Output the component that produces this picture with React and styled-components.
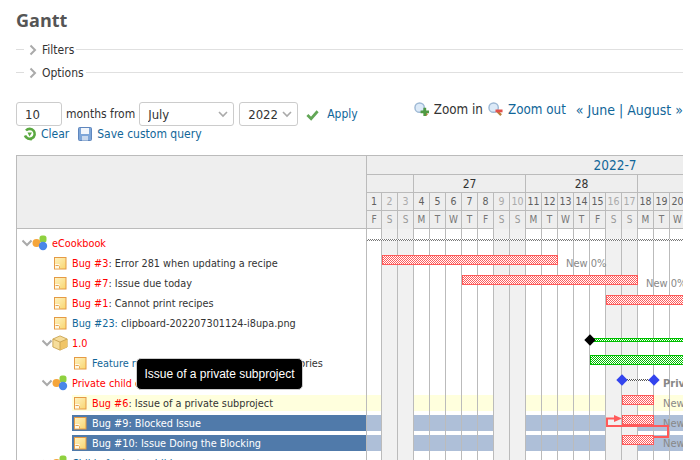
import React from 'react';
import styled, { createGlobalStyle } from 'styled-components';

const GlobalStyle = createGlobalStyle`
  html, body { margin: 0; padding: 0; background: #fff; }
  body { font-family: "DejaVu Sans Condensed", "DejaVu Sans", Verdana, sans-serif; font-size: 12px; color: #333; }
`;

const Page = styled.div`
  width: 700px;
  height: 460px;
  overflow: hidden;
  box-sizing: border-box;
  padding: 0 17px 0 16px;
`;

const Title = styled.h2`
  margin: 0;
  height: 38px;
  line-height: 41px;
  font-family: "Open Sans", sans-serif;
  font-size: 18px;
  font-weight: 700;
  color: #555;
`;

const Fold = styled.div`
  display: flex;
  align-items: center;
  height: 23px;
  font-size: 12px;
  &::before {
    content: '';
    width: 8px;
    border-top: 1px solid #ddd;
  }
  &::after {
    content: '';
    flex: 1;
    border-top: 1px solid #e0e0e0;
    margin-left: 2px;
  }
`;

const FoldArrow = styled.svg`
  width: 8px;
  height: 12px;
  margin: 0 5px 0 5px;
`;

const Controls = styled.div`
  display: flex;
  justify-content: space-between;
  height: 39px;
  margin: 18px 0 14px;
`;

const QueryCol = styled.div`
  display: flex;
  flex-direction: column;
  gap: 1px;
`;

const QueryRow = styled.div`
  display: flex;
  align-items: center;
  height: 24px;
`;

const MonthsInput = styled.input`
  box-sizing: border-box;
  width: 46px;
  height: 24px;
  padding: 0 8px;
  border: 1px solid #ccc;
  border-radius: 3px;
  font: 13px "DejaVu Sans Condensed", sans-serif;
  color: #333;
`;

const SelectWrap = styled.div`
  position: relative;
  width: ${p => p.$width}px;
  margin-left: ${p => p.$gap}px;
`;

const Select = styled.select`
  appearance: none;
  box-sizing: border-box;
  width: 100%;
  height: 24px;
  padding: 0 8px;
  border: 1px solid #ccc;
  border-radius: 3px;
  background: #fff;
  font: 13px "DejaVu Sans Condensed", sans-serif;
  color: #333;
`;

const SelectArrow = styled.svg`
  position: absolute;
  right: 6px;
  top: 9px;
  width: 10px;
  height: 7px;
`;

const Months = styled.span`
  margin: 0 4px;
`;

const Link = styled.a`
  color: #169;
  text-decoration: none;
  font-size: ${p => p.$size || 12}px;
  margin-left: ${p => p.$gap || 0}px;
`;

const ActionIcon = styled.svg`
  flex: none;
  width: ${p => p.$size || 16}px;
  height: ${p => p.$size || 16}px;
  margin-left: ${p => p.$gap || 0}px;
`;

const ActionRow = styled.div`
  display: flex;
  align-items: center;
  height: 14px;
`;

const ZoomBar = styled.div`
  display: flex;
  align-items: center;
  height: 15px;
`;

const ZoomText = styled.span`
  margin-left: 5px;
  color: #333;
  font-size: 13.3px;
`;

const Gantt = styled.div`
  display: flex;
  height: 320px;
`;

const LeftPane = styled.div`
  position: relative;
  box-sizing: border-box;
  width: 351px;
  border-left: 1px solid #bbb;
  border-right: 1px solid #bbb;
`;

const LeftHead = styled.div`
  box-sizing: border-box;
  height: 74px;
  border-top: 1px solid #bbb;
  border-bottom: 1px solid #bbb;
  background: #eee;
`;

const RowList = styled.div`
  display: flex;
  flex-direction: column;
  gap: 4px;
  padding-top: 6px;
`;

const Row = styled.div`
  display: flex;
  align-items: center;
  height: 16px;
  margin-left: ${p => 15 + p.$depth * 20}px;
  background: ${p => (p.$tone === 'note' ? '#ffd' : p.$tone === 'selected' ? '#507aaa' : 'transparent')};
  color: ${p => (p.$tone === 'selected' ? '#fff' : '#333')};
  font-size: 10.8px;
  white-space: nowrap;
`;

const IconSlot = styled.span`
  display: flex;
  flex: none;
  align-items: center;
  width: 20px;
  height: 16px;
`;

const TreeArrow = styled.svg`
  flex: none;
  width: 10px;
  height: 8px;
  margin-left: -10px;
`;

const RowLabel = styled.span`
  color: ${p => (p.$tone === 'selected' ? '#fff' : p.$late ? '#f00' : '#169')};
`;

const Tooltip = styled.div`
  position: absolute;
  left: 119px;
  top: 203px;
  box-sizing: border-box;
  width: 167px;
  height: 32px;
  border: 1px solid #ccc;
  border-radius: 5px;
  background: #000;
  color: #fff;
  font: 12px/30px "Liberation Sans", Arial, sans-serif;
  text-align: center;
`;

const Timeline = styled.div`
  position: relative;
  flex: 1;
  min-width: 0;
  overflow: hidden;
`;

const MonthRow = styled.div`
  box-sizing: border-box;
  width: 496px;
  height: 19px;
  border-top: 1px solid #bbb;
  background: #eee;
  color: #169;
  font-size: 13.5px;
  line-height: 18px;
  text-align: center;
`;

const WeekRow = styled.div`
  display: flex;
  height: 18px;
  background: #eee;
`;

const WeekCell = styled.div`
  box-sizing: border-box;
  flex: none;
  width: ${p => p.$width}px;
  border-top: 1px solid #bbb;
  border-left: ${p => (p.$first ? 0 : '1px solid #bbb')};
  line-height: 18px;
  font-size: 12px;
  text-align: center;
`;

const DayRow = styled.div`
  position: relative;
  z-index: 1;
  display: flex;
  height: 270px;
`;

const DayCol = styled.div`
  box-sizing: border-box;
  flex: none;
  width: ${p => (p.$first ? 14 : 16)}px;
  border-left: ${p => (p.$first ? 0 : '1px solid #bbb')};
  background: ${p => (p.$weekend ? '#f1f1f1' : 'transparent')};
`;

const DayNum = styled.div`
  box-sizing: border-box;
  height: 18px;
  border-top: 1px solid #bbb;
  background: #eee;
  color: ${p => (p.$weekend ? '#aaa' : '#606060')};
  font-size: 10.5px;
  line-height: 17px;
  text-align: center;
`;

const DayLetter = styled.div`
  box-sizing: border-box;
  height: 19px;
  border-top: 1px solid #bbb;
  border-bottom: ${p => (p.$weekend ? 0 : '1px solid #bbb')};
  background: #eee;
  color: ${p => (p.$weekend ? '#999' : '#777')};
  font-size: 10px;
  line-height: 17px;
  text-align: center;
`;

const Stripe = styled.div`
  position: absolute;
  left: 0;
  right: 0;
  top: ${p => p.$top}px;
  height: 16px;
  background: ${p => p.$color};
`;

const Canvas = styled.div`
  position: absolute;
  inset: 0;
  z-index: 2;
`;

const ProjectLine = styled.div`
  position: absolute;
  left: 0;
  right: 0;
  top: 84px;
  height: 2px;
  background: repeating-conic-gradient(#777 0 25%, #fff 0 50%) 0 0 / 2px 2px;
`;

const Bar = styled.div`
  position: absolute;
  box-sizing: border-box;
  left: ${p => p.$left}px;
  top: ${p => p.$top}px;
  width: ${p => p.$width}px;
  height: ${p => p.$height || 10}px;
  border: 1px solid ${p => p.$color};
  background: repeating-conic-gradient(${p => p.$color} 0 25%, #fff 0 50%) 0 0 / 2px 2px;
`;

const Dotted = styled.div`
  position: absolute;
  left: ${p => p.$left}px;
  top: ${p => p.$top}px;
  width: ${p => p.$width}px;
  height: 2px;
  background: repeating-conic-gradient(#555 0 25%, #fff 0 50%) 0 0 / 2px 2px;
`;

const Diamond = styled.div`
  position: absolute;
  left: ${p => p.$left - 4}px;
  top: ${p => p.$top - 4}px;
  width: 8px;
  height: 8px;
  background: ${p => p.$color};
  transform: rotate(45deg);
`;

const BarLabel = styled.span`
  position: absolute;
  left: ${p => p.$left}px;
  top: ${p => p.$top}px;
  color: #888;
  font-size: 11px;
  font-weight: ${p => (p.$bold ? 700 : 400)};
  line-height: 14px;
  white-space: nowrap;
`;

const Relation = styled.svg`
  position: absolute;
  left: 230px;
  top: 260px;
  width: 80px;
  height: 30px;
`;

const Ticket = () => (
  <svg width="16" height="16" viewBox="0 0 16 16">
    <defs>
      <linearGradient id="ticket-fill" x1="0" y1="0" x2="1" y2="1">
        <stop offset="0" stopColor="#fff3c4" />
        <stop offset="1" stopColor="#f8d56e" />
      </linearGradient>
    </defs>
    <rect x="2.5" y="2.5" width="11.5" height="11.5" fill="url(#ticket-fill)" stroke="#e59a45" />
    <path d="M3 9h4.5v4.5H3z" fill="#fff" opacity="0.75" />
    <path d="M3.5 10.5h3l1 1v2" fill="none" stroke="#e8a653" />
  </svg>
);

const ProjectIcon = () => (
  <svg width="16" height="16" viewBox="0 0 16 16">
    <rect x="7.5" y="0.5" width="7" height="7" rx="2.5" fill="#8fd13f" />
    <circle cx="4.5" cy="8" r="4" fill="#f5a63c" />
    <circle cx="11" cy="11" r="4.2" fill="#4a86e8" />
  </svg>
);

const BoxIcon = () => (
  <svg width="16" height="16" viewBox="0 0 18 18">
    <path d="M1 4.5 9 1l8 3.5v9L9 17l-8-3.5z" fill="#f6dd9b" stroke="#c9a24f" />
    <path d="M9 8l8-3.5v9L9 17z" fill="#f0c567" />
    <path d="M1 4.5 9 8l8-3.5M9 8v9" fill="none" stroke="#c9a24f" />
  </svg>
);

const Chevron = () => (
  <TreeArrow viewBox="0 0 10 8">
    <path d="M0.5 1.5 5 6l4.5-4.5" fill="none" stroke="#aaa" strokeWidth="2" />
  </TreeArrow>
);

const Magnifier = ({ minus }) => (
  <ActionIcon $size={15} $gap={minus ? 5 : 0} viewBox="0 0 16 16">
    <path d="M10 10l4 4" stroke="#b8803c" strokeWidth="2.5" />
    <circle cx="6" cy="6" r="5" fill="#dceaf8" stroke="#9db8d4" strokeWidth="1.5" />
    {minus
      ? <rect x="8" y="8" width="7.5" height="3" fill="#e2504a" />
      : <path d="M10 6h3v3h3v3h-3v3h-3v-3H7V9h3z" fill="#4f9a43" />}
  </ActionIcon>
);

const days = ['F', 'S', 'S', 'M', 'T', 'W', 'T', 'F', 'S', 'S', 'M', 'T', 'W', 'T', 'F', 'S', 'S', 'M', 'T', 'W'];

const rows = [
  { depth: 0, icon: 'project', label: 'eCookbook', late: true },
  { depth: 1, label: 'Bug #3', late: true, subject: 'Error 281 when updating a recipe' },
  { depth: 1, label: 'Bug #7', late: true, subject: 'Issue due today' },
  { depth: 1, label: 'Bug #1', late: true, subject: 'Cannot print recipes' },
  { depth: 1, label: 'Bug #23:', subject: 'clipboard-202207301124-i8upa.png', plain: true },
  { depth: 1, icon: 'box', label: '1.0', late: true },
  { depth: 2, label: 'Feature request #2:', subject: 'Add ingredients categories', plain: true },
  { depth: 1, icon: 'project', label: 'Private child of eCookbook', late: true },
  { depth: 2, label: 'Bug #6', late: true, subject: 'Issue of a private subproject', tone: 'note' },
  { depth: 2, label: 'Bug #9:', subject: 'Blocked Issue', tone: 'selected', plain: true },
  { depth: 2, label: 'Bug #10:', subject: 'Issue Doing the Blocking', tone: 'selected', plain: true },
  { depth: 1, icon: 'project', label: 'Child of private child' },
];

const RED = '#ff5a5a';

const TreeRow = ({ row }) => (
  <Row $depth={row.depth} $tone={row.tone}>
    {row.icon && <Chevron />}
    <IconSlot>
      {row.icon === 'project' ? <ProjectIcon /> : row.icon === 'box' ? <BoxIcon /> : <Ticket />}
    </IconSlot>
    <RowLabel $late={row.late} $tone={row.tone}>{row.label}</RowLabel>
    {row.subject && <span>{row.plain ? '\u00a0' : ':\u00a0'}{row.subject}</span>}
  </Row>
);

const App = () => (
  <Page>
    <GlobalStyle />
    <Title>Gantt</Title>
    {['Filters', 'Options'].map(name => (
      <Fold key={name}>
        <FoldArrow viewBox="0 0 8 12">
          <path d="M1.5 1.5 6 6l-4.5 4.5" fill="none" stroke="#aaa" strokeWidth="2" />
        </FoldArrow>
        {name}
      </Fold>
    ))}
    <Controls>
      <QueryCol>
        <QueryRow>
          <MonthsInput defaultValue="10" />
          <Months>months from</Months>
          <SelectWrap $width={95} $gap={0}>
            <Select defaultValue="July">
              <option>June</option>
              <option>July</option>
              <option>August</option>
            </Select>
            <SelectArrow viewBox="0 0 10 7">
              <path d="M1 1l4 4 4-4" fill="none" stroke="#aaa" strokeWidth="1.6" />
            </SelectArrow>
          </SelectWrap>
          <SelectWrap $width={59} $gap={5}>
            <Select defaultValue="2022">
              <option>2021</option>
              <option>2022</option>
            </Select>
            <SelectArrow viewBox="0 0 10 7">
              <path d="M1 1l4 4 4-4" fill="none" stroke="#aaa" strokeWidth="1.6" />
            </SelectArrow>
          </SelectWrap>
          <ActionIcon $size={13} $gap={8} viewBox="0 0 14 14">
            <path d="M1.5 7.5 5.5 11.5 12.5 3.5" fill="none" stroke="#62a656" strokeWidth="3" />
          </ActionIcon>
          <Link $gap={8}>Apply</Link>
        </QueryRow>
        <ActionRow>
          <ActionIcon $size={14} $gap={7} viewBox="0 0 14 14">
            <path d="M3 3.5a5 5 0 1 1-1 5" fill="none" stroke="#5aa840" strokeWidth="2.6" />
            <path d="M4.5 5.5H9L6.5 9.5z" fill="#5aa840" />
            <path d="M6 11h4l-2 3z" fill="#5aa840" />
          </ActionIcon>
          <Link $gap={4}>Clear</Link>
          <ActionIcon $size={14} $gap={9} viewBox="0 0 14 14">
            <rect x="0.5" y="0.5" width="13" height="13" rx="1" fill="#7ea6d8" stroke="#5f86bd" />
            <rect x="3" y="1" width="8" height="6" fill="#f2f6fb" />
            <rect x="4" y="9" width="6" height="4.5" fill="#c9d9ee" />
          </ActionIcon>
          <Link $gap={5}>Save custom query</Link>
        </ActionRow>
      </QueryCol>
      <ZoomBar>
        <Magnifier />
        <ZoomText>Zoom in</ZoomText>
        <Magnifier minus />
        <Link $size={13.3} $gap={5}>Zoom out</Link>
        <Link $size={14} $gap={10}>« June | August »</Link>
      </ZoomBar>
    </Controls>
    <Gantt>
      <LeftPane>
        <LeftHead />
        <RowList>
          {rows.map(row => <TreeRow key={row.label} row={row} />)}
        </RowList>
        <Tooltip>Issue of a private subproject</Tooltip>
      </LeftPane>
      <Timeline>
        <Stripe $top={240} $color="#ffd" />
        <Stripe $top={260} $color="#aebfd8" />
        <Stripe $top={280} $color="#aebfd8" />
        <MonthRow>2022-7</MonthRow>
        <WeekRow>
          <WeekCell $first $width={46} />
          <WeekCell $width={112}>27</WeekCell>
          <WeekCell $width={112}>28</WeekCell>
          <WeekCell $width={112} />
        </WeekRow>
        <DayRow>
          {days.map((letter, i) => {
            const weekend = letter === 'S';
            return (
              <DayCol key={i} $first={i === 0} $weekend={weekend}>
                <DayNum $weekend={weekend}>{i + 1}</DayNum>
                <DayLetter $weekend={weekend}>{letter}</DayLetter>
              </DayCol>
            );
          })}
        </DayRow>
        <Canvas>
          <ProjectLine />
          <Bar $left={15} $top={100} $width={176} $color={RED} />
          <BarLabel $left={199} $top={102}>New 0%</BarLabel>
          <Bar $left={95} $top={120} $width={176} $color={RED} />
          <BarLabel $left={279} $top={122}>New 0%</BarLabel>
          <Bar $left={239} $top={140} $width={90} $color={RED} />
          <Bar $left={223} $top={183} $width={110} $height={4} $color="#00c000" />
          <Diamond $left={223} $top={185} $color="#000" />
          <Bar $left={223} $top={200} $width={110} $color="#00c000" />
          <Dotted $left={255} $top={224} $width={32} />
          <Diamond $left={255} $top={225} $color="#3344ee" />
          <Diamond $left={287} $top={225} $color="#3344ee" />
          <BarLabel $left={296} $top={222} $bold>Private child of eCookbook</BarLabel>
          <Bar $left={255} $top={240} $width={32} $color={RED} />
          <BarLabel $left={296} $top={242}>New 0%</BarLabel>
          <Bar $left={255} $top={260} $width={32} $color={RED} />
          <BarLabel $left={296} $top={262}>New 0%</BarLabel>
          <Bar $left={255} $top={280} $width={32} $color={RED} />
          <BarLabel $left={296} $top={282}>New 0%</BarLabel>
          <Relation viewBox="0 0 80 30">
            <path d="M56 22H71V11H10V3.5H18" fill="none" stroke={RED} strokeWidth="2" />
            <path d="M17 0 25 3.5 17 7z" fill={RED} />
          </Relation>
        </Canvas>
      </Timeline>
    </Gantt>
  </Page>
);

export default App;
